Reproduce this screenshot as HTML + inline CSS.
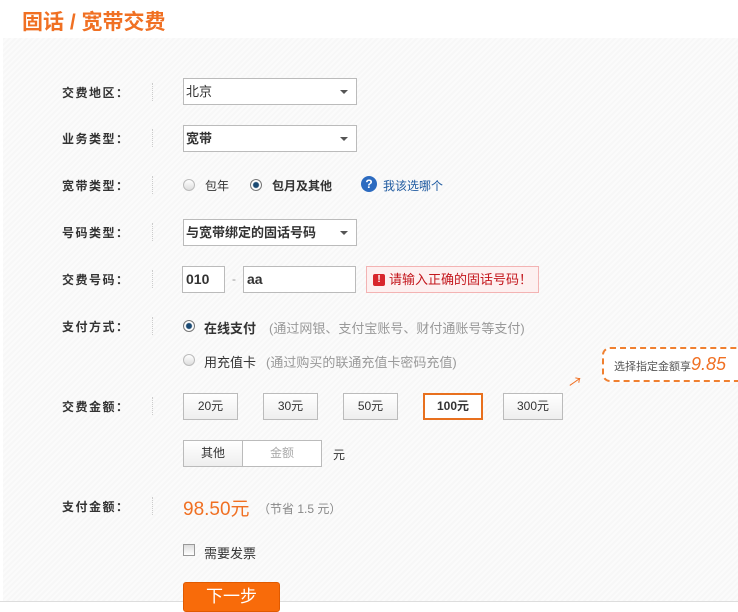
<!DOCTYPE html>
<html><head><meta charset="utf-8">
<style>
*{margin:0;padding:0;box-sizing:border-box}
body{width:738px;height:607px;overflow:hidden;background:#fff;font-family:"Liberation Sans","Noto Sans CJK SC",sans-serif;font-size:12px;color:#333;position:relative}
.title{position:absolute;left:22px;top:6px;font-size:21px;color:#f07023;font-weight:bold}
.panel{position:absolute;left:3px;top:38px;width:735px;height:563px;background:repeating-linear-gradient(135deg,#f7f7f7 0 2px,#fbfbfb 2px 4px);}
.bot{position:absolute;left:0;top:601px;width:738px;height:1px;background:#ddd}
.a{position:absolute}
.lab{position:absolute;left:62px;font-weight:bold;font-size:12px;color:#333;line-height:16px;letter-spacing:1.5px}
.sep{position:absolute;left:152px;width:0;height:18px;border-left:1px dotted #ccc}
.sel{position:absolute;left:183px;width:174px;height:27px;border:1px solid #bbb;background:#fff;line-height:25px;padding-left:2px;font-size:13px}
.sel:after{content:"";position:absolute;right:8px;top:11px;border:4px solid transparent;border-top:4px solid #555}
.radio{position:absolute;width:12px;height:12px;border-radius:50%;border:1px solid #bbb;background:linear-gradient(#fff,#ddd)}
.radio.on{background:radial-gradient(circle,#1b4a73 0 2.5px,#fff 3.5px);border-color:#777}
.inp{position:absolute;height:27px;border:1px solid #bbb;background:#fff;font-weight:bold;font-size:14px;line-height:25px;padding-left:3px}
.btn{position:absolute;top:393px;height:27px;width:55px;border:1px solid #bbb;background:linear-gradient(#fff,#eee);text-align:center;line-height:25px;font-size:12px}
.gray{color:#999}
</style></head><body>
<div class="title">固话 / 宽带交费</div>
<div class="panel"></div>
<div class="bot"></div>

<div class="lab" style="top:85px">交费地区：</div><div class="sep" style="top:83px"></div>
<div class="sel" style="top:78px">北京</div>

<div class="lab" style="top:131px">业务类型：</div><div class="sep" style="top:129px"></div>
<div class="sel" style="top:125px;font-weight:bold">宽带</div>

<div class="lab" style="top:178px">宽带类型：</div><div class="sep" style="top:176px"></div>
<div class="radio" style="left:183px;top:179px"></div><div class="a" style="left:205px;top:177px">包年</div>
<div class="radio on" style="left:250px;top:179px"></div><div class="a" style="left:272px;top:177px;font-weight:bold">包月及其他</div>
<div class="a" style="left:361px;top:176px;width:16px;height:16px;border-radius:50%;background:#2c6bc0;color:#fff;font-weight:bold;text-align:center;line-height:16px;font-size:12px">?</div>
<div class="a" style="left:383px;top:177px;color:#1f5aa0">我该选哪个</div>

<div class="lab" style="top:225px">号码类型：</div><div class="sep" style="top:223px"></div>
<div class="sel" style="top:219px;font-weight:bold">与宽带绑定的固话号码</div>

<div class="lab" style="top:272px">交费号码：</div><div class="sep" style="top:270px"></div>
<div class="inp" style="left:182px;top:266px;width:43px">010</div>
<div class="a gray" style="left:232px;top:272px">-</div>
<div class="inp" style="left:243px;top:266px;width:113px">aa</div>
<div class="a" style="left:366px;top:266px;width:173px;height:27px;border:1px solid #f3b3b3;background:#fdf0f0;color:#c3161c;line-height:25px;padding-left:22px;font-size:13px">请输入正确的固话号码！<span style="position:absolute;left:6px;top:7px;width:12px;height:12px;background:#d8262c;border-radius:2px;color:#fff;font-size:10px;line-height:12px;text-align:center;font-weight:bold">!</span></div>

<div class="lab" style="top:319px">支付方式：</div><div class="sep" style="top:317px"></div>
<div class="radio on" style="left:183px;top:320px"></div><div class="a" style="left:204px;top:318px;font-weight:bold;font-size:13px">在线支付</div>
<div class="a gray" style="left:269px;top:318px;font-size:13px">(通过网银、支付宝账号、财付通账号等支付)</div>
<div class="radio" style="left:183px;top:354px"></div><div class="a" style="left:204px;top:352px;font-size:13px">用充值卡</div>
<div class="a gray" style="left:266px;top:352px;font-size:13px">(通过购买的联通充值卡密码充值)</div>

<div class="a" style="left:602px;top:347px;width:150px;height:35px;border:2px dashed #f08030;border-radius:8px;border-right:none;background:#fff;padding:8px 0 0 10px;color:#555;font-size:11px;white-space:nowrap">选择指定金额享<span style="color:#f07023;font-size:18px;font-style:italic;line-height:14px">9.85</span></div>
<div class="a" style="left:568px;top:372px;color:#f07023;font-size:14px;transform:rotate(10deg)">↗</div>

<div class="lab" style="top:399px">交费金额：</div><div class="sep" style="top:397px"></div>
<div class="btn" style="left:183px">20元</div>
<div class="btn" style="left:263px">30元</div>
<div class="btn" style="left:343px">50元</div>
<div class="btn" style="left:423px;border:2px solid #e8701e;background:#fff;font-weight:bold;line-height:23px;width:60px">100元</div>
<div class="btn" style="left:503px;width:60px">300元</div>

<div class="a" style="left:183px;top:440px;width:60px;height:27px;border:1px solid #bbb;background:linear-gradient(#fff,#eee);text-align:center;line-height:25px">其他</div>
<div class="a gray" style="left:242px;top:440px;width:80px;height:27px;border:1px solid #bbb;background:#fff;text-align:center;line-height:25px;color:#aaa">金额</div>
<div class="a" style="left:333px;top:446px">元</div>

<div class="lab" style="top:499px">支付金额：</div><div class="sep" style="top:497px"></div>
<div class="a" style="left:183px;top:494px;color:#f07023;font-size:19px">98.50元</div>
<div class="a gray" style="left:258px;top:500px;color:#888">（节省 1.5 元）</div>

<div class="a" style="left:183px;top:544px;width:12px;height:12px;border:1px solid #999;background:linear-gradient(#ddd,#fff)"></div>
<div class="a" style="left:204px;top:543px;font-size:13px">需要发票</div>

<div class="a" style="left:183px;top:582px;width:97px;height:30px;background:#f86b0a;border:1px solid #e05a00;border-radius:3px;color:#fff;font-size:17px;text-align:center;line-height:28px">下一步</div>
</body></html>
